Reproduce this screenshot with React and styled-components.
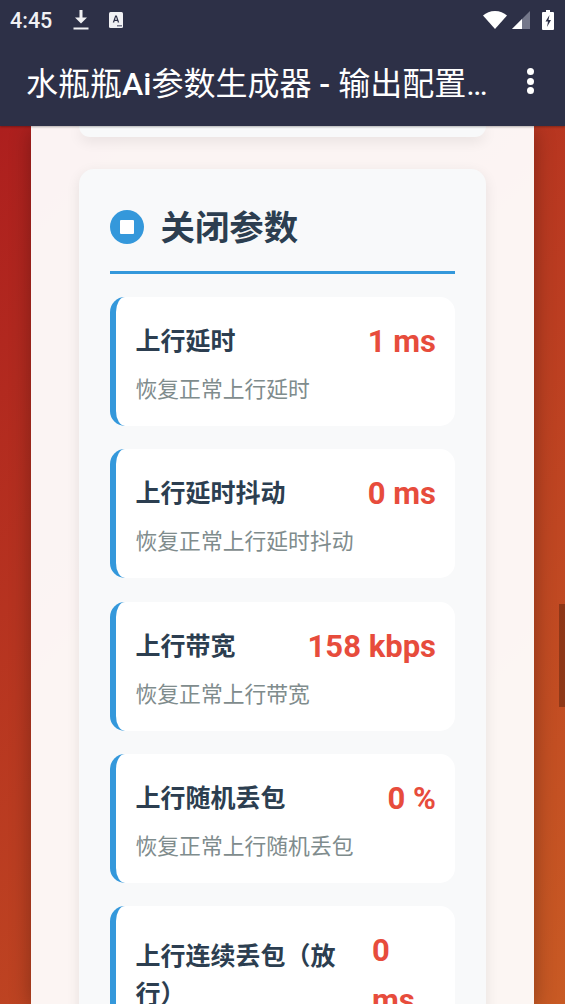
import styled, { createGlobalStyle } from "styled-components";

const GlobalStyle = createGlobalStyle`
html,body{
margin:0;
padding:0;
}
body{
font-family:Roboto,"Noto Sans CJK SC",sans-serif;
}
`;
const Page = styled.div`
width:565px;
height:1004px;
display:flex;
flex-direction:column;
overflow:hidden;
position:relative;
`;
const Header = styled.header`
height:126px;
flex:none;
background:#2d3047;
color:white;
box-shadow:0 1px 2px rgba(0,0,0,.3);
position:relative;
z-index:2;
`;
const StatusBar = styled.div`
height:40px;
display:flex;
align-items:center;
padding:0 11px 0 10px;
`;
const Clock = styled.span`
font-size:21.5px;
font-weight:500;
color:#f1f1f4;
`;
const StatusLeft = styled.div`
display:flex;
align-items:center;
gap:20.5px;
flex:1;
`;
const StatusRight = styled.div`
display:flex;
align-items:center;
gap:5px;
`;
const Toolbar = styled.div`
height:86px;
display:flex;
align-items:center;
padding:0 0 4px 26px;
box-sizing:border-box;
`;
const AppTitle = styled.h1`
margin:0;
width:463px;
font-size:32px;
font-weight:400;
white-space:nowrap;
overflow:hidden;
text-overflow:ellipsis;
b{
font-weight:500;
}
`;
const MenuButton = styled.div`
margin-left:38px;
display:flex;
flex-direction:column;
gap:2.5px;
i{
display:block;
width:7px;
height:7px;
border-radius:50%;
background:white;
}
`;
const Background = styled.main`
flex:1;
background:linear-gradient(135deg,#ad1f1e 0%,#c85a24 100%);
padding:0 31px;
overflow:hidden;
`;
const Panel = styled.div`
height:100%;
background:rgba(255,255,255,.95);
box-shadow:0 4px 20px rgba(0,0,0,.3);
padding:0 48px;
box-sizing:border-box;
`;
const PrevCard = styled.div`
height:11px;
background:#f8f9fa;
border-radius:0 0 15px 15px;
box-shadow:0 4px 14px rgba(0,0,0,.09);
margin-bottom:32px;
`;
const Card = styled.section`
background:#f8f9fa;
border-radius:15px;
box-shadow:0 4px 14px rgba(0,0,0,.09);
padding:31px;
`;
const CardHead = styled.div`
display:flex;
align-items:center;
gap:16.5px;
height:54px;
padding-bottom:17px;
border-bottom:3px solid #3498db;
margin-bottom:23px;
`;
const StopIcon = styled.div`
width:34px;
height:34px;
border-radius:50%;
background:#3498db;
display:flex;
align-items:center;
justify-content:center;
&::after{
content:"";
width:14px;
height:14px;
border-radius:1px;
background:white;
}
`;
const CardTitle = styled.h2`
margin:0;
padding-bottom:5px;
font-size:34.4px;
font-weight:700;
color:#2c3e50;
`;
const RowList = styled.div`
display:flex;
flex-direction:column;
gap:23.3px;
`;
const Row = styled.div`
background:white;
border-left:6px solid #3498db;
border-radius:15px;
padding:20px 19px 21px 19.5px;
display:flex;
flex-direction:column;
gap:8px;
`;
const RowTop = styled.div`
display:flex;
align-items:center;
justify-content:space-between;
gap:20px;
`;
const Label = styled.div`
font-size:25px;
font-weight:700;
line-height:38px;
color:#2c3e50;
`;
const Value = styled.div`
font-size:31px;
font-weight:700;
line-height:50px;
color:#e74c3c;
flex:none;
width:${p => (p.$narrow ? "60px" : "auto")};
margin-left:${p => (p.$narrow ? "-4px" : "0")};
margin-right:${p => (p.$narrow ? "4px" : "0")};
`;
const Hint = styled.div`
font-size:21.8px;
line-height:30px;
color:#7f8c8d;
`;
const ScrollThumb = styled.div`
position:absolute;
right:0;
top:604px;
width:6px;
height:103px;
background:rgba(80,30,10,.45);
z-index:3;
`;

const rows = [
  { label: "上行延时", value: "1 ms", hint: "恢复正常上行延时" },
  { label: "上行延时抖动", value: "0 ms", hint: "恢复正常上行延时抖动" },
  { label: "上行带宽", value: "158 kbps", hint: "恢复正常上行带宽" },
  { label: "上行随机丢包", value: "0 %", hint: "恢复正常上行随机丢包" },
  { label: "上行连续丢包（放行）", value: "0 ms", hint: "恢复正常上行连续丢包", narrow: true },
];

const App = () => {
  return (
    <Page>
      <GlobalStyle />
      <Header>
        <StatusBar>
          <StatusLeft>
            <Clock>4:45</Clock>
            <svg width="16" height="22" viewBox="0 0 16 22" fill="#f1f1f4">
              <path d="M6.500 1h3v7.500H14L8 14.500 2 8.500h4.500z" />
              <rect x="0.500" y="18.500" width="15" height="2" />
            </svg>
            <svg width="14" height="16" viewBox="0 0 14 16">
              <rect width="14" height="16" rx="1.500" fill="#f1f1f4" />
              <path d="M3.800 10.500 6.200 3.500h1.600L10.200 10.500H8.800L8.400 9H5.600l-.4 1.500zM6 7.800h2L7 4.800z" fill="#2d3047" />
              <rect x="8" y="13" width="5" height="1.500" fill="#74778a" />
            </svg>
          </StatusLeft>
          <StatusRight>
            <svg width="24" height="18" viewBox="0 0 24 18" fill="white">
              <path d="M0 4.500C3 1.800 7.300 0 12 0s9 1.800 12 4.500L12 18z" />
            </svg>
            <svg width="18" height="18" viewBox="0 0 18 18">
              <path d="M0 18 18 0v18z" fill="#74778a" />
              <path d="M0 18 10 8v10z" fill="white" />
            </svg>
            <svg width="12" height="20" viewBox="0 0 12 20" style={{ marginLeft: 7 }}>
              <path d="M4 0h4v2h3a1 1 0 0 1 1 1v16a1 1 0 0 1-1 1H1a1 1 0 0 1-1-1V3a1 1 0 0 1 1-1h3z" fill="white" />
              <path d="M7.500 5 3.500 11.500H6L5 17l4-7H6.500z" fill="#2d3047" />
            </svg>
          </StatusRight>
        </StatusBar>
        <Toolbar>
          <AppTitle>水瓶瓶<b>Ai</b>参数生成器 <b>-</b> 输出配置结果页面</AppTitle>
          <MenuButton>
            <i />
            <i />
            <i />
          </MenuButton>
        </Toolbar>
      </Header>
      <Background>
        <Panel>
          <PrevCard />
          <Card>
            <CardHead>
              <StopIcon />
              <CardTitle>关闭参数</CardTitle>
            </CardHead>
            <RowList>
              {rows.map(r => (
                <Row key={r.label}>
                  <RowTop>
                    <Label>{r.label}</Label>
                    <Value $narrow={r.narrow}>{r.value}</Value>
                  </RowTop>
                  <Hint>{r.hint}</Hint>
                </Row>
              ))}
            </RowList>
          </Card>
        </Panel>
      </Background>
      <ScrollThumb />
    </Page>
  );
};

export default App;
